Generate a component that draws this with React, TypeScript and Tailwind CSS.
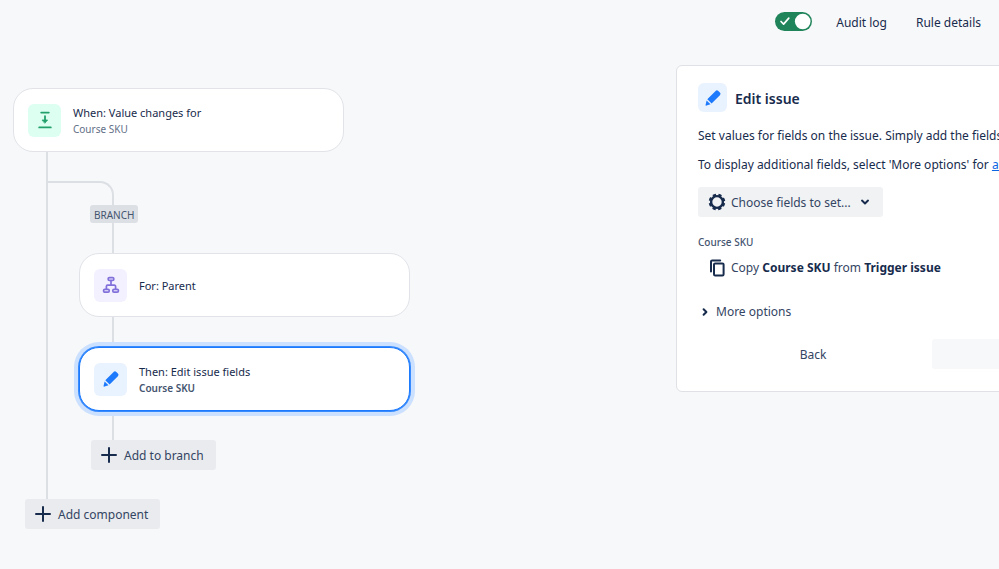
import { useState, type ReactNode } from "react";
import clsx from "clsx";

type Tone = "green" | "purple" | "blue";

const TONES: Record<Tone, string> = {
  green: "bg-[#dcfff1] text-[#22a06b]",
  purple: "bg-[#f3f0ff] text-[#8270db]",
  blue: "bg-[#e9f2ff] text-[#1d7afc]",
};

function PencilIcon() {
  return (
    <svg width="18" height="18" viewBox="0 0 18 18" fill="currentColor" aria-hidden>
      <path d="M11.6 2a1.9 1.9 0 0 1 2.7 0l1.6 1.6a1.9 1.9 0 0 1 0 2.7l-8.3 8.3-4.3-4.3z" />
      <path d="M2.6 11.4 6.5 15.3l-4 1.3a.7.7 0 0 1-.9-.9z" />
    </svg>
  );
}

function ValueIcon() {
  return (
    <svg width="18" height="18" viewBox="0 0 18 18" fill="none" stroke="currentColor" strokeWidth="1.8" strokeLinecap="round" aria-hidden>
      <path d="M5.2 1.6h7.6M3.2 16.4h11.6M9 5.2v4" />
      <path d="M6.4 9h5.2L9 12z" fill="currentColor" strokeWidth="0.8" strokeLinejoin="round" />
    </svg>
  );
}

function TreeIcon() {
  return (
    <svg width="18" height="18" viewBox="0 0 18 18" fill="none" stroke="currentColor" strokeWidth="1.7" strokeLinejoin="round" aria-hidden>
      <rect x="6.2" y="1.6" width="5.6" height="2.8" rx="1.2" />
      <rect x="1.6" y="13.4" width="5.6" height="2.8" rx="1.2" />
      <rect x="10.8" y="13.4" width="5.6" height="2.8" rx="1.2" />
      <path d="M9 4.6v4.6M4.4 13.2v-2.8a1.2 1.2 0 0 1 1.2-1.2h6.8a1.2 1.2 0 0 1 1.2 1.2v2.8" />
    </svg>
  );
}

function PlusIcon() {
  return (
    <svg width="16" height="16" viewBox="0 0 16 16" fill="none" stroke="currentColor" strokeWidth="2" strokeLinecap="round" aria-hidden>
      <path d="M8 1v14M1 8h14" />
    </svg>
  );
}

function GearIcon() {
  return (
    <svg width="18" height="18" viewBox="0 0 18 18" fill="none" stroke="currentColor" aria-hidden>
      <circle cx="9" cy="9" r="5.9" strokeWidth="2.4" />
      <circle cx="9" cy="9" r="7.2" strokeWidth="2.2" strokeDasharray="3.2 2.455" strokeDashoffset="-1.2" />
    </svg>
  );
}

function CopyIcon() {
  return (
    <svg width="16" height="18" viewBox="0 0 16 18" fill="none" stroke="currentColor" strokeWidth="2" aria-hidden>
      <rect x="5" y="4.4" width="9.6" height="12" rx="1.2" />
      <path d="M2 12.4V2.6a1.2 1.2 0 0 1 1.2-1.2h8" strokeLinecap="round" />
    </svg>
  );
}

function Chevron({ right = false }: { right?: boolean }) {
  return (
    <svg width="10" height="10" viewBox="0 0 10 10" fill="none" stroke="currentColor" strokeWidth="2" strokeLinecap="round" strokeLinejoin="round" aria-hidden>
      <path d={right ? "M3.6 2.2 6.4 5 3.6 7.8" : "M2 3.6 5 6.4 8 3.6"} />
    </svg>
  );
}

function RuleCard({
  icon,
  tone,
  title,
  detail,
  selected = false,
}: {
  icon: ReactNode;
  tone: Tone;
  title: string;
  detail?: string;
  selected?: boolean;
}) {
  return (
    <button
      type="button"
      className={clsx(
        "flex h-16 w-[331px] items-center gap-3 rounded-[20px] border bg-white pl-[14px] text-left",
        selected
          ? "relative z-10 border-[#1d7afc] shadow-[0_0_0_1px_#388bff,0_0_0_5px_#cce0ff]"
          : "border-[#e1e3e8]",
      )}
    >
      <span className={clsx("flex size-[33px] items-center justify-center rounded-md", TONES[tone])}>
        {icon}
      </span>
      <span className="flex flex-col pt-0.5">
        <span className="text-[11px] leading-4">{title}</span>
        {detail && (
          <span
            className={clsx(
              "text-[10px] leading-4",
              selected ? "font-semibold text-[#44546f]" : "text-[#626f86]",
            )}
          >
            {detail}
          </span>
        )}
      </span>
    </button>
  );
}

function Connector({ className }: { className: string }) {
  return <div className={clsx("ml-[33px] w-0.5 bg-[#dcdfe4]", className)} />;
}

function AddButton({ label, className }: { label: string; className: string }) {
  return (
    <button
      type="button"
      className={clsx(
        "flex h-[30px] items-center gap-[7px] rounded-[3px] bg-[#e9ebee] pr-3 pl-[10px] text-[12px]",
        className,
      )}
    >
      <PlusIcon />
      <span className="pt-0.5 text-[#344563]">{label}</span>
    </button>
  );
}

function RuleChain() {
  return (
    <div className="min-w-0 flex-1 pt-[23px] pl-[13px]">
      <RuleCard icon={<ValueIcon />} tone="green" title="When: Value changes for" detail="Course SKU" />

      {/* trunk with the nested branch hanging off it */}
      <div className="ml-[33px] border-l-2 border-[#dcdfe4] pt-[29px] pb-[29px]">
        <div className="h-6 w-[66px] rounded-tr-[14px] border-t-2 border-r-2 border-[#dcdfe4]" />
        <div className="ml-[31px] flex flex-col items-start">
          <span className="ml-[11px] flex h-[18px] items-center rounded-[3px] bg-[#dcdfe4] px-1 pt-0.5 text-[10px] text-[#44546f]">
            BRANCH
          </span>
          <Connector className="h-[30px]" />
          <RuleCard icon={<TreeIcon />} tone="purple" title="For: Parent" />
          <Connector className="h-[30px]" />
          <RuleCard icon={<PencilIcon />} tone="blue" title="Then: Edit issue fields" detail="Course SKU" selected />
          <Connector className="h-[29px]" />
          <AddButton label="Add to branch" className="ml-3" />
        </div>
      </div>

      <AddButton label="Add component" className="ml-3" />
    </div>
  );
}

function EditPanel() {
  return (
    <aside className="-mr-[185px] w-[508px] flex-none rounded-md border border-[#dfe1e6] bg-white px-[21px] pt-[17px] pb-[22px]">
      <header className="flex items-center gap-2">
        <span className={clsx("flex size-[29px] items-center justify-center rounded-md", TONES.blue)}>
          <PencilIcon />
        </span>
        <h2 className="pt-0.5 text-[14px] leading-5 font-semibold">Edit issue</h2>
      </header>

      <p className="mt-[14px] text-[12px] leading-5 whitespace-nowrap">
        Set values for fields on the issue. Simply add the fields
      </p>
      <p className="mt-[9px] text-[12px] leading-5 whitespace-nowrap">
        To display additional fields, select 'More options' for{" "}
        <a href="#advanced" className="text-[#0c66e4] underline">
          advanced
        </a>
      </p>

      <div className="relative mt-3 w-[185px]">
        <span className="pointer-events-none absolute inset-y-0 left-[10px] flex items-center">
          <GearIcon />
        </span>
        <select
          aria-label="Choose fields to set"
          className="h-[30px] w-full appearance-none rounded-[3px] bg-[#f1f2f4] pt-0.5 pl-[33px] text-[12px] text-[#344563]"
        >
          <option>Choose fields to set...</option>
        </select>
        <span className="pointer-events-none absolute inset-y-0 right-[13px] flex items-center">
          <Chevron />
        </span>
      </div>

      <h3 className="mt-[17px] text-[10px] leading-4 font-medium text-[#44546f]">Course SKU</h3>
      <div className="mt-2 flex items-center gap-[6px] pl-[11px] text-[12px] leading-5">
        <CopyIcon />
        <span className="text-[#344563]">
          Copy <strong className="font-bold text-[#172b4d]">Course SKU</strong> from{" "}
          <strong className="font-bold text-[#172b4d]">Trigger issue</strong>
        </span>
      </div>

      <button type="button" className="mt-6 flex items-center gap-[6px] pl-[2px] text-[12px] leading-5">
        <Chevron right />
        <span className="text-[#344563]">More options</span>
      </button>

      <div className="mt-[17px] grid grid-cols-2 gap-1">
        <button type="button" className="h-[30px] rounded-[3px] pt-0.5 text-[12px] text-[#344563]">
          Back
        </button>
        <button type="button" disabled aria-label="Save" className="h-[30px] rounded-[3px] bg-[#f7f8f9]" />
      </div>
    </aside>
  );
}

export default function App() {
  const [enabled, setEnabled] = useState(true);

  return (
    <div className="min-h-screen overflow-hidden bg-[#f7f8fa] font-['Noto_Sans','Open_Sans',sans-serif] text-[#172b4d]">
      <nav className="flex h-[43px] items-center justify-end pr-[18px] text-[12px]">
        <span className="relative mr-6 flex">
          <input
            type="checkbox"
            role="switch"
            aria-label="Rule enabled"
            checked={enabled}
            onChange={(e) => setEnabled(e.target.checked)}
            className="h-[19px] w-[37px] appearance-none rounded-full bg-[#8590a2] checked:bg-[#1f845a]"
          />
          <svg
            className="pointer-events-none absolute inset-0"
            width="37"
            height="19"
            viewBox="0 0 37 19"
            fill="none"
            aria-hidden
          >
            {enabled && (
              <path d="m6 9.5 2.6 2.6 5.2-6" stroke="#fff" strokeWidth="1.7" strokeLinecap="round" strokeLinejoin="round" />
            )}
            <circle cx={enabled ? 27.7 : 9} cy="9.5" r="7.8" fill="#fff" />
          </svg>
        </span>
        <a href="#audit-log" className="mr-[29px] pt-0.5">
          Audit log
        </a>
        <a href="#rule-details" className="pt-0.5">
          Rule details
        </a>
      </nav>

      <main className="flex items-start pt-[22px]">
        <RuleChain />
        <EditPanel />
      </main>
    </div>
  );
}
